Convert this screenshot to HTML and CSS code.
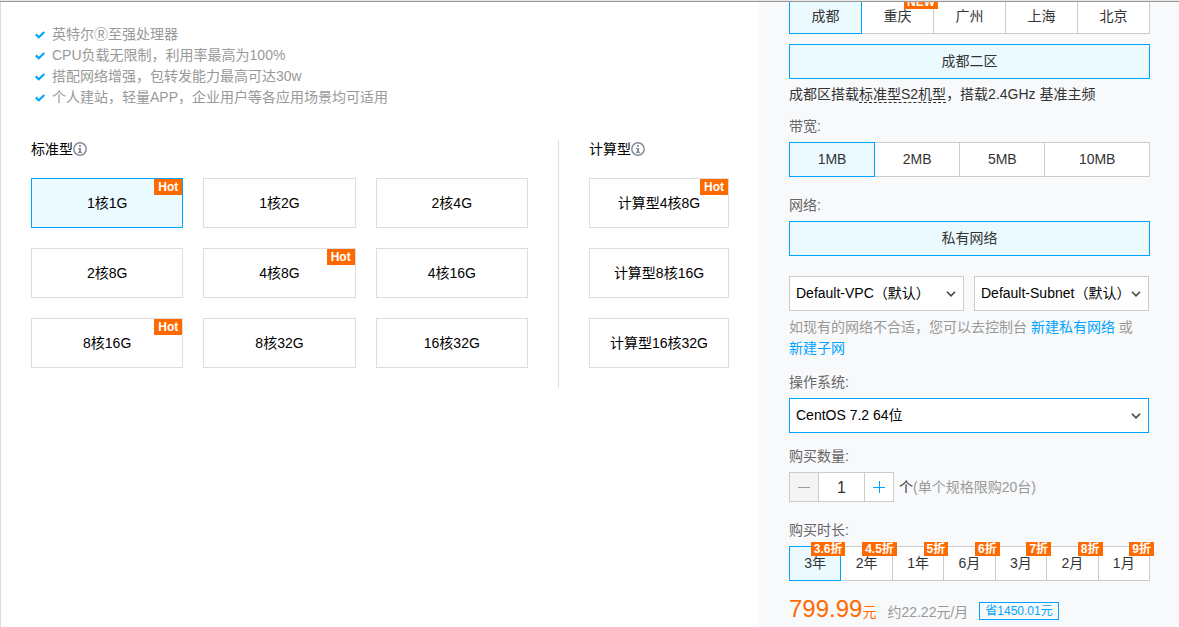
FILE: index.html
```html
<!DOCTYPE html>
<html lang="zh-CN">
<head>
<meta charset="utf-8">
<meta name="viewport" content="width=device-width, initial-scale=1">
<title>云服务器选购</title>
<link rel="stylesheet" href="styles.css">
</head>
<body>
<svg class="sprite" aria-hidden="true">
  <symbol id="check" viewBox="0 0 10 8"><path d="M.8 3.4 3.8 6.2 9.3 1" fill="none" stroke="currentColor" stroke-width="2.2"/></symbol>
  <symbol id="info" viewBox="0 0 14 14"><circle cx="7" cy="7" r="6.2" fill="none" stroke="currentColor" stroke-width="1.5"/><path d="M6 3h2v1.8H6zM5 5.9h3v3.8h1v1.3H5V9.7h1V7H5z" fill="currentColor"/></symbol>
  <symbol id="chevron" viewBox="0 0 10 6"><path d="M1 .8 5 4.8 9 .8" fill="none" stroke="currentColor" stroke-width="1.6"/></symbol>
</svg>
<div class="page">
  <main class="models">
    <ul class="features">
      <li><svg><use href="#check"/></svg>英特尔Ⓡ至强处理器</li>
      <li><svg><use href="#check"/></svg>CPU负载无限制，利用率最高为100%</li>
      <li><svg><use href="#check"/></svg>搭配网络增强，包转发能力最高可达30w</li>
      <li><svg><use href="#check"/></svg>个人建站，轻量APP，企业用户等各应用场景均可适用</li>
    </ul>
    <div class="families">
      <section class="family family-standard">
        <h2 class="family-title">标准型<svg><use href="#info"/></svg></h2>
        <div class="cards">
          <button class="card selected">1核1G<span class="hot">Hot</span></button>
          <button class="card">1核2G</button>
          <button class="card">2核4G</button>
          <button class="card">2核8G</button>
          <button class="card">4核8G<span class="hot">Hot</span></button>
          <button class="card">4核16G</button>
          <button class="card">8核16G<span class="hot">Hot</span></button>
          <button class="card">8核32G</button>
          <button class="card">16核32G</button>
        </div>
      </section>
      <section class="family family-compute">
        <h2 class="family-title">计算型<svg><use href="#info"/></svg></h2>
        <div class="cards">
          <button class="card">计算型4核8G<span class="hot">Hot</span></button>
          <button class="card">计算型8核16G</button>
          <button class="card">计算型16核32G</button>
        </div>
      </section>
    </div>
  </main>

  <aside class="order">
    <div class="segments regions">
      <button class="segment selected">成都</button>
      <button class="segment">重庆<span class="tag">NEW</span></button>
      <button class="segment">广州</button>
      <button class="segment">上海</button>
      <button class="segment">北京</button>
    </div>
    <div class="segments zones"><button class="segment selected">成都二区</button></div>
    <p class="zone-note">成都区搭载<span class="term">标准型S2机型</span>，搭载2.4GHz 基准主频</p>

    <section class="field">
      <h3 class="label">带宽:</h3>
      <div class="segments bandwidth">
        <button class="segment selected">1MB</button>
        <button class="segment">2MB</button>
        <button class="segment">5MB</button>
        <button class="segment wide">10MB</button>
      </div>
    </section>

    <section class="field field-network">
      <h3 class="label">网络:</h3>
      <div class="segments"><button class="segment selected">私有网络</button></div>
      <div class="selects">
        <div class="select-box">
          <select class="select" aria-label="私有网络"><option>Default-VPC（默认）</option></select>
          <svg class="chevron"><use href="#chevron"/></svg>
        </div>
        <div class="select-box">
          <select class="select" aria-label="子网"><option>Default-Subnet（默认）</option></select>
          <svg class="chevron"><use href="#chevron"/></svg>
        </div>
      </div>
      <p class="hint">如现有的网络不合适，您可以去控制台 <a href="#">新建私有网络</a> 或 <a href="#">新建子网</a></p>
    </section>

    <section class="field">
      <label class="label" for="os">操作系统:</label>
      <div class="selects">
        <div class="select-box">
          <select class="select active" id="os"><option>CentOS 7.2 64位</option></select>
          <svg class="chevron"><use href="#chevron"/></svg>
        </div>
      </div>
    </section>

    <section class="field">
      <label class="label" for="count">购买数量:</label>
      <div class="quantity">
        <div class="stepper">
          <button class="step" aria-label="减少" disabled><svg viewBox="0 0 12 12"><path d="M0 6.5h12"/></svg></button>
          <input class="count" id="count" type="text" value="1">
          <button class="step" aria-label="增加"><svg viewBox="0 0 12 12"><path d="M0 6.5h12M6.5 0v12"/></svg></button>
        </div>
        <span>个<span class="muted">(单个规格限购20台)</span></span>
      </div>
    </section>

    <section class="field field-duration">
      <h3 class="label">购买时长:</h3>
      <div class="segments">
        <button class="segment selected">3年<span class="tag">3.6折</span></button>
        <button class="segment">2年<span class="tag">4.5折</span></button>
        <button class="segment">1年<span class="tag">5折</span></button>
        <button class="segment">6月<span class="tag">6折</span></button>
        <button class="segment">3月<span class="tag">7折</span></button>
        <button class="segment">2月<span class="tag">8折</span></button>
        <button class="segment">1月<span class="tag">9折</span></button>
      </div>
    </section>

    <div class="total">
      <span class="price"><span class="amount">799.99</span>元</span>
      <span class="monthly">约22.22元/月</span>
      <span class="saving">省1450.01元</span>
    </div>
  </aside>
</div>
</body>
</html>
```
FILE: styles.css
```css
* {
  box-sizing: border-box;
}

body {
  margin: 0;
  border-top: 1px solid #e6e6e6;
  overflow: hidden;
  background: #fff;
  color: #333;
  font: 14px/21px "Liberation Sans", "Noto Sans CJK SC", sans-serif;
}

h2, h3, p, ul {
  margin: 0;
  padding: 0;
  font-size: 14px;
  font-weight: normal;
}

button, select, input {
  margin: 0;
  color: inherit;
  font: inherit;
}

a {
  color: #00a4ff;
  text-decoration: none;
}

.sprite {
  display: none;
}

.page {
  display: flex;
  min-height: calc(100vh - 1px);
  border-top: 1px solid #999;
}

/* Model picker */
.models {
  flex: 1;
  padding: 22px 30px 0;
  border-left: 1px solid #ddd;
}

.features {
  margin-bottom: 32px;
  color: #999;
  list-style: none;
}

.features li {
  display: flex;
  align-items: center;
  gap: 7px;
  padding-left: 4px;
}

.features svg {
  width: 10px;
  height: 8px;
  color: #00a4ff;
}

.families {
  display: flex;
}

.family {
  padding-bottom: 20px;
}

.family-standard {
  flex: 1;
  padding-right: 30px;
  border-right: 1px solid #ddd;
}

.family-compute {
  width: 170px;
  padding-left: 30px;
}

.family-title {
  display: flex;
  align-items: center;
  height: 18px;
  margin-bottom: 20px;
  color: #000;
}

.family-title svg {
  width: 14px;
  height: 14px;
  color: #868e9b;
}

.cards {
  display: grid;
  gap: 20px;
}

.family-standard .cards {
  grid-template-columns: repeat(3, 1fr);
}

.card {
  position: relative;
  height: 50px;
  padding: 0;
  border: 1px solid #ddd;
  background: #fff;
  color: #000;
}

.hot {
  position: absolute;
  top: 0;
  right: 0;
  padding: 0 4px;
  background: #ff6a00;
  color: #fff;
  font-size: 12px;
  font-weight: bold;
  line-height: 16px;
}

.card.selected,
.segment.selected {
  border-color: #00a4ff;
  background: #ebfaff;
}

.segment.selected {
  z-index: 1;
}

/* Order form */
.order {
  width: 420px;
  padding: 0 29px 0 30px;
  overflow: hidden;
  background: #f8f9fb;
}

.segments {
  display: flex;
}

.segment {
  position: relative;
  flex: 1;
  height: 35px;
  padding: 0;
  border: 1px solid #ccc;
  background: #fff;
}

.segment + .segment {
  margin-left: -1px;
}

.bandwidth .segment {
  flex-grow: 43;
}

.bandwidth .wide {
  flex-grow: 53;
}

.regions {
  margin-top: -3px;
}

.zones {
  margin-top: 10px;
}

.zone-note {
  margin-top: 5px;
}

.term {
  border-bottom: 1px dashed #333;
}

.tag {
  position: absolute;
  z-index: 2;
  top: -5px;
  right: -5px;
  padding: 0 3px;
  background: #ff6a00;
  color: #fff;
  font-size: 12px;
  font-weight: bold;
  line-height: 14px;
}

.field {
  margin-top: 13px;
}

.zone-note + .field {
  margin-top: 11px;
}

.field-network,
.field-duration {
  margin-top: 18px;
}

.label {
  display: block;
  margin-bottom: 5px;
  color: #666;
}

.selects {
  display: flex;
  gap: 10px;
  padding-right: 1px;
}

.field-network .selects {
  margin-top: 20px;
}

.select-box {
  position: relative;
  flex: 1;
}

.select {
  display: block;
  width: 100%;
  height: 35px;
  padding: 0 6px;
  border: 1px solid #ccc;
  border-radius: 0;
  background: #fff;
  color: #000;
  appearance: none;
}

.select.active {
  border-color: #00a4ff;
}

.chevron {
  position: absolute;
  top: 15px;
  right: 8px;
  width: 10px;
  height: 6px;
  color: #444;
  pointer-events: none;
}

.hint {
  margin-top: 6px;
  color: #999;
}

.quantity {
  display: flex;
  align-items: center;
  gap: 5px;
}

.stepper {
  display: flex;
  height: 30px;
  border: 1px solid #ccc;
  background: #fff;
}

.step {
  display: grid;
  place-items: center;
  width: 28px;
  padding: 0;
  border: 0;
  background: #fff;
  color: #00a4ff;
}

.step:disabled {
  background: #f4f4f4;
  color: #999;
}

.step svg {
  width: 12px;
  height: 12px;
  fill: none;
  stroke: currentColor;
}

.count {
  width: 47px;
  padding: 0;
  border: solid #ccc;
  border-width: 0 1px;
  background: #fff;
  font-size: 16px;
  text-align: center;
}

.muted {
  color: #999;
}

.total {
  display: flex;
  align-items: baseline;
  gap: 11px;
  margin-top: 14px;
}

.price {
  color: #ff6a00;
  line-height: 28px;
}

.amount {
  font-size: 24px;
}

.monthly {
  color: #999;
}

.saving {
  align-self: center;
  padding: 0 5px;
  border: 1px solid #00a4ff;
  color: #00a4ff;
  font-size: 12px;
  line-height: 16px;
}
```
